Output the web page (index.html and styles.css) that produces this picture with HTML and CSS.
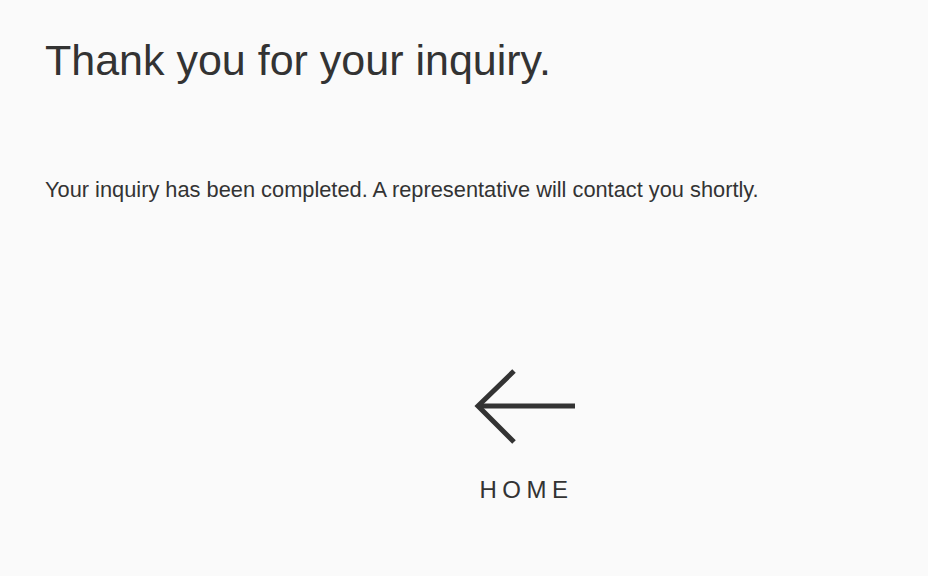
FILE: index.html
```html
<!DOCTYPE html>
<html lang="en">
<head>
  <meta charset="UTF-8" />
  <meta name="viewport" content="width=device-width, initial-scale=1.0"/>
  <title>Thank You | Inquiry</title>
  <link rel="stylesheet" href="styles.css">
</head>
<body>
  <div class="page">
    <h1>Thank you for your inquiry.</h1>
    <p class="message">Your inquiry has been completed. A representative will contact you shortly.</p>

    <a class="home-link" href="index.html">
      <svg class="arrow" width="102" height="78" viewBox="0 0 102 78">
        <path d="M4 38 H101" stroke="#333" stroke-width="5" fill="none"/>
        <path d="M40 3 L4 38 L40 74" stroke="#333" stroke-width="5" fill="none"/>
      </svg>
      <span>HOME</span>
    </a>
  </div>
</body>
</html>
```

FILE: styles.css
```css
body {
  margin: 0;
  background: #fafafa;
  color: #333;
  font-family: 'Liberation Sans', Arial, sans-serif;
}
.page {
  padding: 35px 45px;
}
h1 {
  margin: 0;
  font-size: 43px;
  font-weight: normal;
  line-height: 1.2;
}
.message {
  margin: 88px 0 0;
  font-size: 21.8px;
  line-height: 1.4;
}
.home-link {
  display: flex;
  flex-direction: column;
  align-items: center;
  width: 160px;
  margin: 163px 0 0 400px;
  color: #333;
  text-decoration: none;
}
.arrow {
  display: block;
}
.home-link span {
  margin-top: 30px;
  font-size: 24px;
  letter-spacing: 5.5px;
  padding-left: 3px;
}
```
